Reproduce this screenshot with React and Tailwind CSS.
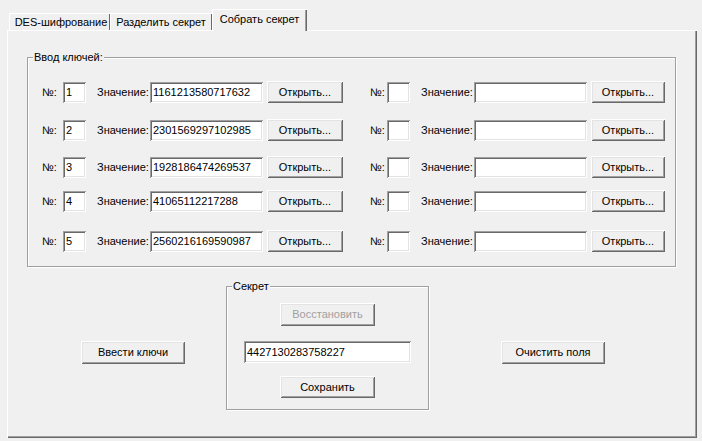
import React from 'react';

const raised =
  'shadow-[inset_1px_1px_0_#ffffff,inset_-1px_-1px_0_#696969,inset_2px_2px_0_#e3e3e3,inset_-2px_-2px_0_#a0a0a0]';
const sunken =
  'shadow-[inset_1px_1px_0_#a0a0a0,inset_-1px_-1px_0_#ffffff,inset_2px_2px_0_#696969,inset_-2px_-2px_0_#e3e3e3]';

const Button = ({ children, className = '', disabled }) => (
  <button
    type="button"
    className={`flex items-center justify-center bg-[#f0f0f0] ${raised} ${
      disabled ? 'text-[#a0a0a0]' : 'text-black'
    } ${className}`}
  >
    {children}
  </button>
);

const Field = ({ value = '', className = '' }) => (
  <input
    readOnly
    defaultValue={value}
    className={`bg-white pl-[3px] outline-none text-black ${sunken} ${className}`}
  />
);

const GroupBox = ({ title, className = '', children }) => (
  <div className={`relative border border-[#a0a0a0] shadow-[inset_1px_1px_0_#ffffff,1px_1px_0_#ffffff] ${className}`}>
    <span className="absolute -top-[8px] left-[5px] bg-[#f0f0f0] px-[1px] leading-[14px]">{title}</span>
    {children}
  </div>
);

// left/right halves of one key row
const KeyRow = ({ num, value, mt }) => (
  <div className={`flex items-center h-[22px] ${mt}`}>
    <span className="ml-[14px] w-[21px]">№:</span>
    <Field value={num} className="w-[23px] h-[21px]" />
    <span className="ml-[11px] w-[53px]">Значение:</span>
    <Field value={value} className="w-[113px] h-[21px]" />
    <Button className="ml-[4px] w-[76px] h-[22px]">Открыть...</Button>

    <span className="ml-[27px] w-[17px]">№:</span>
    <Field className="w-[23px] h-[21px]" />
    <span className="ml-[11px] w-[53px]">Значение:</span>
    <Field className="w-[113px] h-[21px]" />
    <Button className="ml-[4px] w-[74px] h-[22px]">Открыть...</Button>
  </div>
);

const keys = [
  { num: '1', value: '1161213580717632', mt: 'mt-[23px]' },
  { num: '2', value: '2301569297102985', mt: 'mt-[16px]' },
  { num: '3', value: '1928186474269537', mt: 'mt-[15px]' },
  { num: '4', value: '41065112217288', mt: 'mt-[12px]' },
  { num: '5', value: '2560216169590987', mt: 'mt-[18px]' },
];

const App = () => {
  return (
    <div className="w-[702px] h-[441px] overflow-hidden bg-[#f0f0f0] text-black text-[11px] font-['Liberation_Sans',Arial,sans-serif]">
      {/* tabs */}
      <div className="flex items-end h-[30px] pl-[9px]">
        <div className="w-[101px] h-[17px] pt-[2px] pl-[3px] flex items-center justify-center shadow-[inset_1px_1px_0_#ffffff,inset_-1px_0_0_#696969]">
          DES-шифрование
        </div>
        <div className="w-[102px] h-[17px] pt-[2px] flex items-center justify-center shadow-[inset_1px_1px_0_#ffffff,inset_-1px_0_0_#696969]">
          Разделить секрет
        </div>
        <div className="relative z-10 -mb-[1px] w-[95px] h-[22px] pb-[1px] flex items-center justify-center bg-[#f0f0f0] shadow-[inset_1px_1px_0_#ffffff,inset_-1px_0_0_#696969,inset_-2px_0_0_#a0a0a0]">
          Собрать секрет
        </div>
      </div>

      {/* panel */}
      <div className="ml-[7px] w-[690px] h-[408px] pl-[20px] pt-[27px] shadow-[inset_1px_1px_0_#ffffff,inset_-1px_-1px_0_#696969,inset_-2px_-2px_0_#a0a0a0]">
        <GroupBox title="Ввод ключей:" className="w-[649px] pb-[14px]">
          {keys.map((k) => (
            <KeyRow key={k.num} {...k} />
          ))}
        </GroupBox>

        <div className="flex items-start mt-[19px]">
          <Button className="ml-[54px] mt-[55px] w-[104px] h-[23px]">Ввести ключи</Button>

          <GroupBox title="Секрет" className="ml-[41px] w-[203px] h-[124px]">
            <div className="flex flex-col items-center pt-[16px]">
              <Button disabled className="w-[95px] h-[23px]">Восстановить</Button>
              <Field value="4427130283758227" className="mt-[15px] w-[167px] h-[22px]" />
              <Button className="mt-[13px] w-[95px] h-[22px]">Сохранить</Button>
            </div>
          </GroupBox>

          <Button className="ml-[72px] mt-[55px] w-[104px] h-[23px]">Очистить поля</Button>
        </div>
      </div>
    </div>
  );
};

export default App;
